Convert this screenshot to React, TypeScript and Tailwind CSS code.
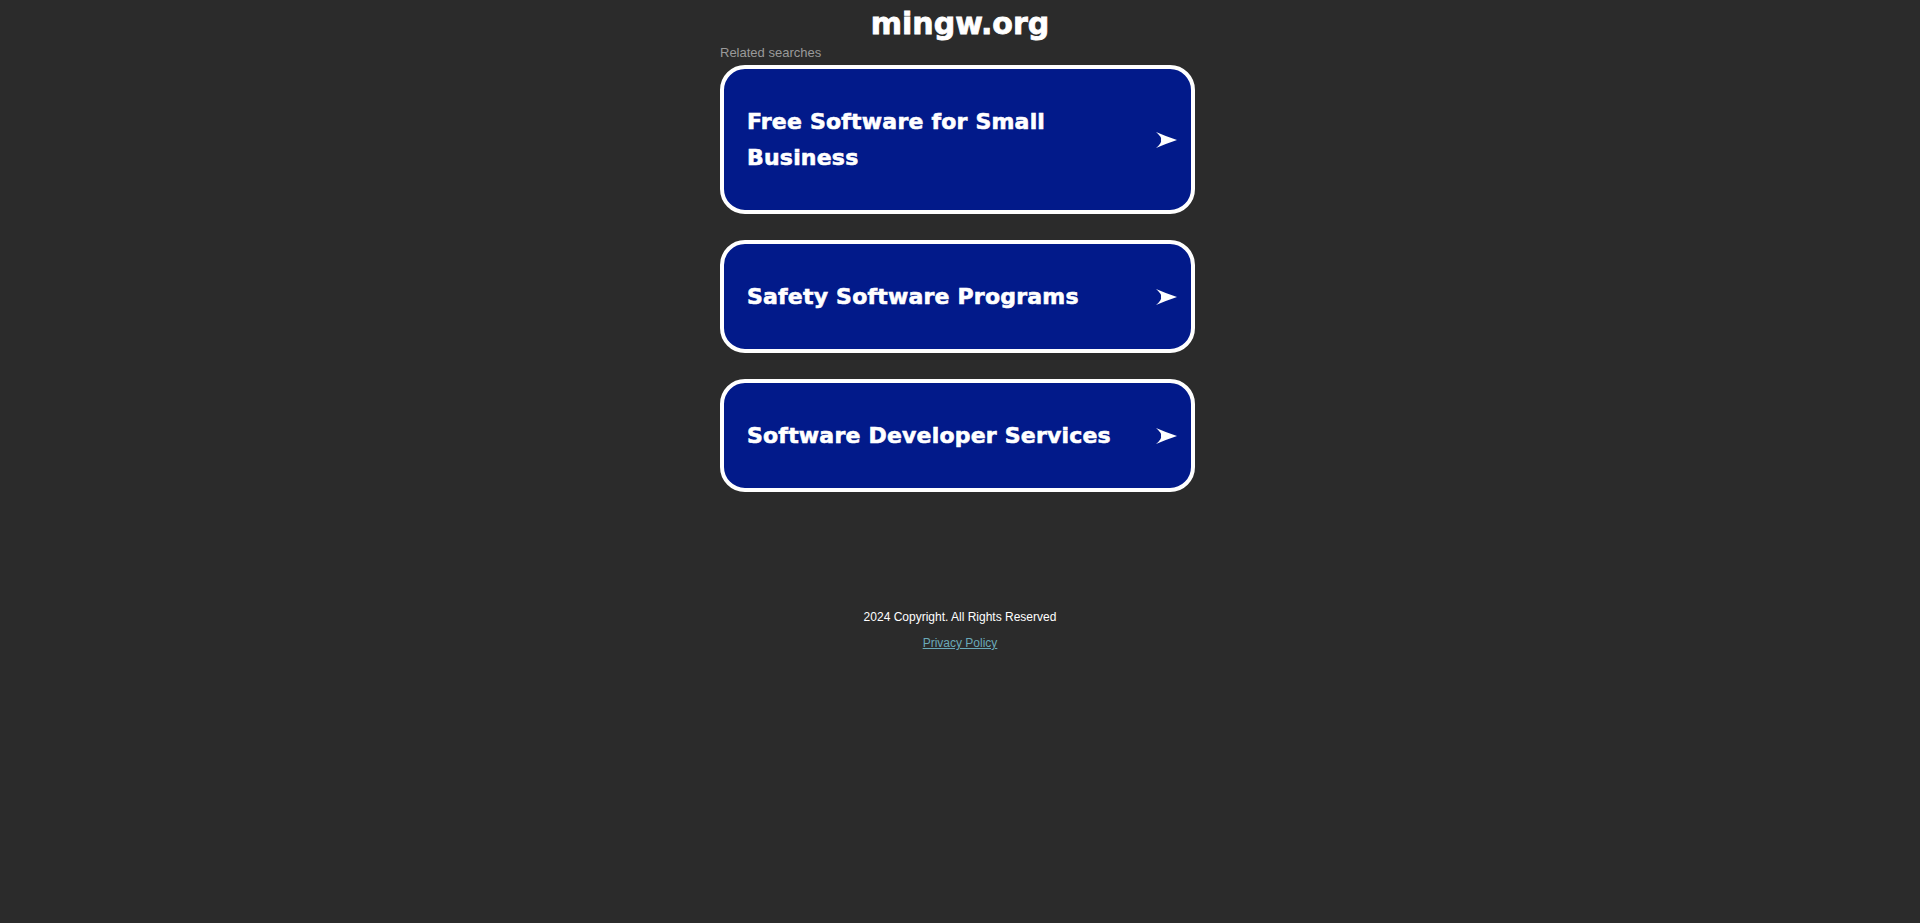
const searches = [
  "Free Software for Small Business",
  "Safety Software Programs",
  "Software Developer Services",
];

function Arrow() {
  return (
    <svg width="21" height="16" viewBox="0 0 21 16" className="shrink-0">
      <path d="M0 0 Q9 4 21 8 Q9 12 0 16 Q6 11 5 8 Q6 5 0 0 Z" fill="#ffffff" />
    </svg>
  );
}

function SearchCard({ label }: { label: string }) {
  return (
    <a
      href="#"
      className="flex w-[475px] items-center justify-between gap-5 rounded-[25px] border-4 border-white bg-[#021a8a] pt-[35px] pb-[34px] pl-[23px] pr-[14px] text-white"
    >
      <span className="flex-1 font-['DejaVu_Sans',sans-serif] text-[22px] font-bold leading-[36px] tracking-[0.2px] [-webkit-text-stroke:0.6px_#fff]">
        {label}
      </span>
      <Arrow />
    </a>
  );
}

export default function App() {
  return (
    <div className="min-h-screen bg-[#2b2b2b] font-['Liberation_Sans',Arial,sans-serif] text-white">
      <h1 className="pt-[5px] text-center font-['DejaVu_Sans',sans-serif] text-[30px] font-bold leading-[37px] [-webkit-text-stroke:0.8px_#fff]">
        mingw.org
      </h1>
      <div className="mx-auto flex w-[480px] flex-col">
        <p className="mt-[3px] text-[13px] leading-[15px] text-[#9a9a9a]">Related searches</p>
        <div className="mt-[5px] flex flex-col gap-[26px]">
          {searches.map((s) => (
            <SearchCard key={s} label={s} />
          ))}
        </div>
      </div>
      <div className="mt-[118px] flex flex-col items-center gap-[12px] text-[12px] leading-[14px]">
        <p>2024 Copyright. All Rights Reserved</p>
        <a href="#" className="text-[#6aa9b8] underline">
          Privacy Policy
        </a>
      </div>
    </div>
  );
}
